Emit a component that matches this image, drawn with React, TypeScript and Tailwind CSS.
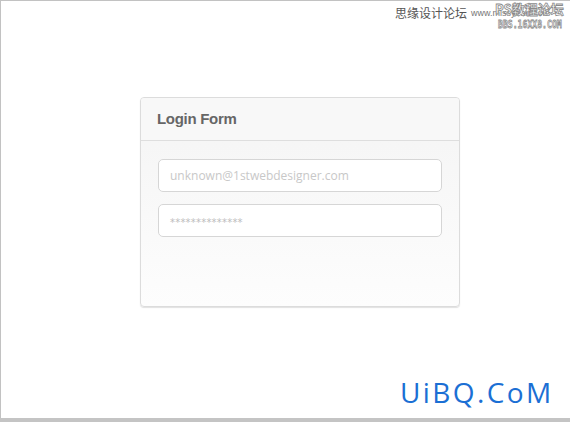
import React from "react";

export default function App() {
  return (
    <div className="relative w-[570px] h-[422px] bg-white overflow-hidden flex flex-col">
      <div className="flex-1 border-t border-l border-[#c2c2c2] flex flex-col">
        <div className="ml-[139px] mt-[96px] w-[320px] h-[210px] rounded-[4px] border border-[#dcdcdc] shadow-[0_1px_1px_rgba(0,0,0,0.12)] bg-gradient-to-b from-[#f4f4f4] to-[#fdfdfd] flex flex-col overflow-hidden">
          <div className="h-[43px] shrink-0 border-b border-[#dedede] bg-[#f8f8f8] flex items-center pl-[16px]">
            <span className="text-[15px] font-bold text-[#666666] tracking-[-0.3px] font-['Liberation_Sans',Arial,sans-serif] pt-[1px]">
              Login Form
            </span>
          </div>
          <div className="flex flex-col gap-[12px] px-[17px] pt-[18px]">
            <div className="h-[33px] rounded-[5px] border border-[#d6d6d6] bg-white flex items-center pl-[11px]">
              <span className="text-[12px] text-[#c8c8c8] font-['Open_Sans',sans-serif]">
                unknown@1stwebdesigner.com
              </span>
            </div>
            <div className="h-[33px] rounded-[5px] border border-[#d6d6d6] bg-white flex items-center pl-[11px]">
              <span className="text-[10px] text-[#bdbdbd] tracking-[0.2px] font-['DejaVu_Sans',sans-serif] pt-[3px]">
                **************
              </span>
            </div>
          </div>
        </div>
      </div>
      <div className="h-[4px] shrink-0 bg-[#c4c4c4]" />

      {/* watermark top-right */}
      <div className="absolute top-[6px] left-[395px] flex items-center">
        <span className="text-[12px] leading-[14px] text-[#555] font-['Noto_Sans_CJK_SC',sans-serif]">
          思缘设计论坛
        </span>
        <span className="ml-[4px] text-[9px] leading-[14px] text-[#777] font-['Liberation_Sans',sans-serif]">
          www.missyuan.com
        </span>
      </div>
      <div className="absolute top-[1px] left-[495px] text-[13px] leading-[16px] font-bold text-white [-webkit-text-stroke:0.8px_#8a8a8a] font-['Noto_Sans_CJK_SC',sans-serif]">
        PS教程论坛
      </div>
      <div className="absolute top-[18px] left-[498px] origin-left scale-x-[0.74] text-[11px] leading-[14px] font-bold text-white [-webkit-text-stroke:0.8px_#8a8a8a] font-['DejaVu_Sans_Mono',monospace] whitespace-nowrap">
        BBS.16XX8.COM
      </div>

      {/* bottom-right logo */}
      <div className="absolute left-[400px] top-[374px] text-[28px] leading-[36px] text-[#1b6fd4] tracking-[2.4px] font-['Open_Sans',sans-serif]">
        UiBQ.CoM
      </div>
    </div>
  );
}
